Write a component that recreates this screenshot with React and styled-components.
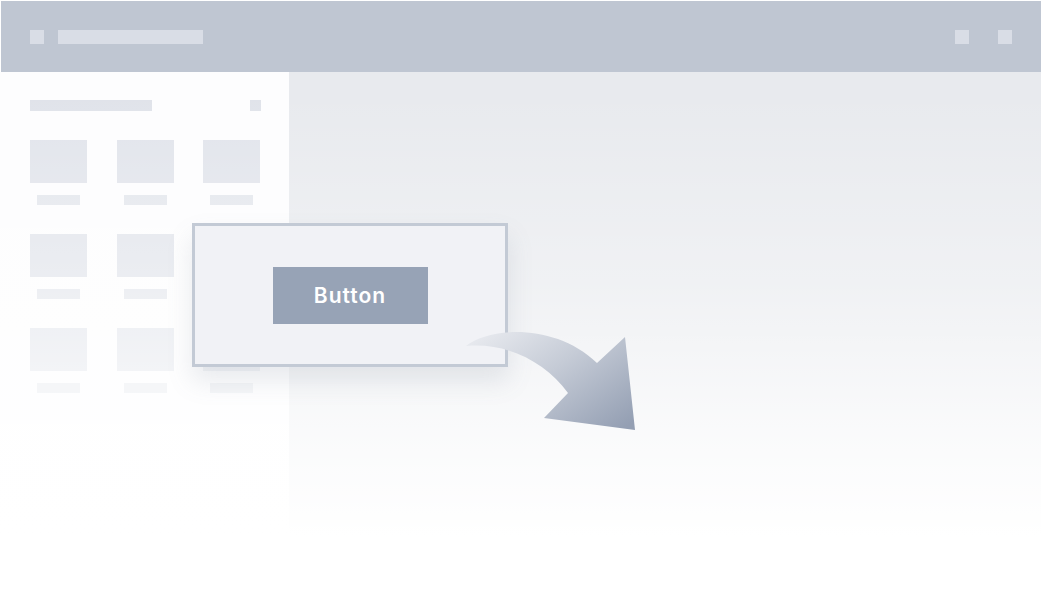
import React from "react";
import styled, { createGlobalStyle } from "styled-components";

const Global = createGlobalStyle`
  html, body { margin: 0; padding: 0; background: #ffffff; }
  body { font-family: "Inter", "Noto Sans", sans-serif; }
  #root { width: 1041px; height: 595px; overflow: hidden; }
`;

const Frame = styled.div`
  position: relative;
  width: 1041px;
  height: 595px;
  display: flex;
  flex-direction: column;
  background: #ffffff;
  padding: 1px 0 0 1px;
  box-sizing: border-box;
  overflow: hidden;
`;

const TopBar = styled.div`
  height: 71px;
  flex: none;
  background: #bfc6d2;
  display: flex;
  align-items: center;
  padding: 0 29px 0 29px;
  gap: 14px;
`;

const Block = styled.div`
  width: ${(p) => p.w}px;
  height: ${(p) => p.h || 14}px;
  background: ${(p) => p.c || "#d9dde6"};
  flex: none;
`;

const Spacer = styled.div`
  flex: 1;
`;

const RightIcons = styled.div`
  display: flex;
  gap: 29px;
`;

const Body = styled.div`
  flex: 1;
  display: flex;
  margin-left: -1px;
`;

const Sidebar = styled.div`
  width: 289px;
  flex: none;
  background: #fdfdfe;
  padding: 28px 28px 0 30px;
  box-sizing: border-box;
`;

const SideHeader = styled.div`
  display: flex;
  justify-content: space-between;
  align-items: center;
  margin-bottom: 29px;
`;

const Grid = styled.div`
  display: grid;
  grid-template-columns: repeat(3, 57px);
  column-gap: 29.5px;
  row-gap: 29px;
`;

const Tile = styled.div`
  display: flex;
  flex-direction: column;
  align-items: center;
  gap: 12px;
`;

const Thumb = styled.div`
  width: 57px;
  height: 43px;
  background: #e1e4eb;
`;

const Label = styled.div`
  width: 43px;
  height: 10px;
  background: #e3e6ec;
`;

const Canvas = styled.div`
  flex: 1;
  background: #e8eaee;
`;

const Fade = styled.div`
  position: absolute;
  left: 0;
  right: 0;
  top: 72px;
  bottom: 0;
  pointer-events: none;
  background: linear-gradient(
    to bottom,
    rgba(255, 255, 255, 0) 20px,
    rgba(255, 255, 255, 0.35) 210px,
    rgba(255, 255, 255, 0.8) 370px,
    rgba(255, 255, 255, 1) 465px
  );
`;

const DragCard = styled.div`
  position: absolute;
  left: 192px;
  top: 223px;
  width: 316px;
  height: 144px;
  box-sizing: border-box;
  border: 3px solid #c3cad5;
  background: #f1f2f6;
  display: flex;
  align-items: center;
  justify-content: center;
  box-shadow: 0 14px 24px rgba(110, 120, 140, 0.15);
  z-index: 2;
`;

const Btn = styled.div`
  width: 155px;
  height: 57px;
  margin-top: 1px;
  background: #97a3b6;
  color: #ffffff;
  display: flex;
  align-items: center;
  justify-content: center;
  font-family: "Inter", "Noto Sans", sans-serif;
  font-weight: 600;
  font-size: 21px;
  letter-spacing: 1px;
`;

const Arrow = styled.svg`
  position: absolute;
  left: 460px;
  top: 325px;
  z-index: 3;
  overflow: visible;
`;

const cols = [0, 1, 2];
const rows = [0, 1, 2];

export default function App() {
  return (
    <>
      <Global />
      <Frame>
        <TopBar>
          <Block w={14} />
          <Block w={145} />
          <Spacer />
          <RightIcons>
            <Block w={14} />
            <Block w={14} />
          </RightIcons>
        </TopBar>
        <Body>
          <Sidebar>
            <SideHeader>
              <Block w={122} h={11} c="#e0e3ea" />
              <Block w={11} h={11} c="#e0e3ea" />
            </SideHeader>
            <Grid>
              {rows.map((r) =>
                cols.map((c) => (
                  <Tile key={`${r}-${c}`}>
                    <Thumb />
                    <Label />
                  </Tile>
                ))
              )}
            </Grid>
          </Sidebar>
          <Canvas />
        </Body>
        <Fade />
        <DragCard>
          <Btn>Button</Btn>
        </DragCard>
        <Arrow width="180" height="110" viewBox="0 0 180 110">
          <defs>
            <linearGradient id="ag" x1="0" y1="0.1" x2="1" y2="0.9">
              <stop offset="0" stopColor="#e8eaef" />
              <stop offset="0.45" stopColor="#c5cbd6" />
              <stop offset="1" stopColor="#949fb3" />
            </linearGradient>
          </defs>
          <path
            d="M6 21 C 30 2, 95 -2, 137 38 L 165 12 L 175 105 L 84 93 L 108 68 C 86 38, 48 17, 6 21 Z"
            fill="url(#ag)"
          />
        </Arrow>
      </Frame>
    </>
  );
}
